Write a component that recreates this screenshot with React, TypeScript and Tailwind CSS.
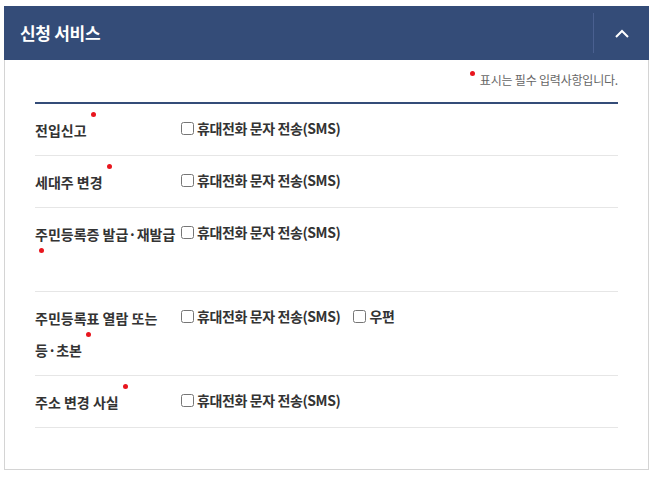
import React from 'react'

type Servico = {
  id: string
  label: string
  opcoes: string[]
}

const servicos: Servico[] = [
  { id: 'jeonip', label: '전입신고', opcoes: ['휴대전화 문자 전송(SMS)'] },
  { id: 'sedaeju', label: '세대주 변경', opcoes: ['휴대전화 문자 전송(SMS)'] },
  { id: 'jumin', label: '주민등록증 발급·재발급', opcoes: ['휴대전화 문자 전송(SMS)'] },
  { id: 'deungbon', label: '주민등록표 열람 또는 등·초본', opcoes: ['휴대전화 문자 전송(SMS)', '우편'] },
  { id: 'juso', label: '주소 변경 사실', opcoes: ['휴대전화 문자 전송(SMS)'] }
]

function RequiredDot() {
  return (
    <span className="relative top-[-2px] ml-[4px] inline-block h-[5px] w-[5px] rounded-full bg-[#e8161e] align-top" />
  )
}

// palavras não quebram no meio (nem no ·)
function Label({ text }: { text: string }) {
  const words = text.split(' ')
  return (
    <>
      {words.map((w, i) => (
        <React.Fragment key={i}>
          {i > 0 && ' '}
          <span className="whitespace-nowrap">{w}</span>
        </React.Fragment>
      ))}
    </>
  )
}

export default function App() {
  return (
    <div className="min-h-[477px] bg-white pl-[4px] pr-[6px] pt-[6px] font-['Noto_Sans_CJK_KR','Noto_Sans',sans-serif]">
      <div className="w-[645px]">
        <div className="flex h-[54px] items-center justify-between bg-[#344c78]">
          <h2 className="pl-[16px] text-[17px] font-bold tracking-[-0.3px] text-white">신청 서비스</h2>
          <button
            type="button"
            aria-label="접기"
            className="flex h-[40px] w-[56px] items-center justify-center border-l border-[#4a6090]"
          >
            <svg width="14" height="9" viewBox="0 0 14 9" fill="none">
              <polyline points="1,8 7,2 13,8" stroke="#ffffff" strokeWidth="2" />
            </svg>
          </button>
        </div>

        <div className="border-x border-b border-[#d4d4d4] px-[30px] pb-[41px] pt-[10px]">
          <p className="mb-[12px] flex items-start justify-end text-[12px] leading-[20px] tracking-[-0.2px] text-[#666]">
            <span className="mr-[5px] mt-[1px] inline-block h-[5px] w-[5px] rounded-full bg-[#e8161e]" />
            표시는 필수 입력사항입니다.
          </p>

          <div className="border-t-2 border-[#344c78]">
            {servicos.map((s) => (
              <div key={s.id} className="flex border-b border-[#e6e6e6] pb-[9px] pt-[10px]">
                <div className="w-[146px] shrink-0 text-[14px] font-bold leading-[32px] tracking-[0px] text-[#333]">
                  <Label text={s.label} />
                  {'\u200B'}
                  <RequiredDot />
                </div>
                <div className="flex items-start">
                  {s.opcoes.map((op, i) => (
                    <label
                      key={op}
                      className={`flex items-center text-[14px] font-bold leading-[28px] tracking-[-0.4px] text-[#333] ${
                        i > 0 ? 'ml-[13px]' : ''
                      }`}
                    >
                      <input type="checkbox" className="m-0 mr-[3px] h-[13px] w-[13px]" />
                      {op}
                    </label>
                  ))}
                </div>
              </div>
            ))}
          </div>
        </div>
      </div>
    </div>
  )
}
